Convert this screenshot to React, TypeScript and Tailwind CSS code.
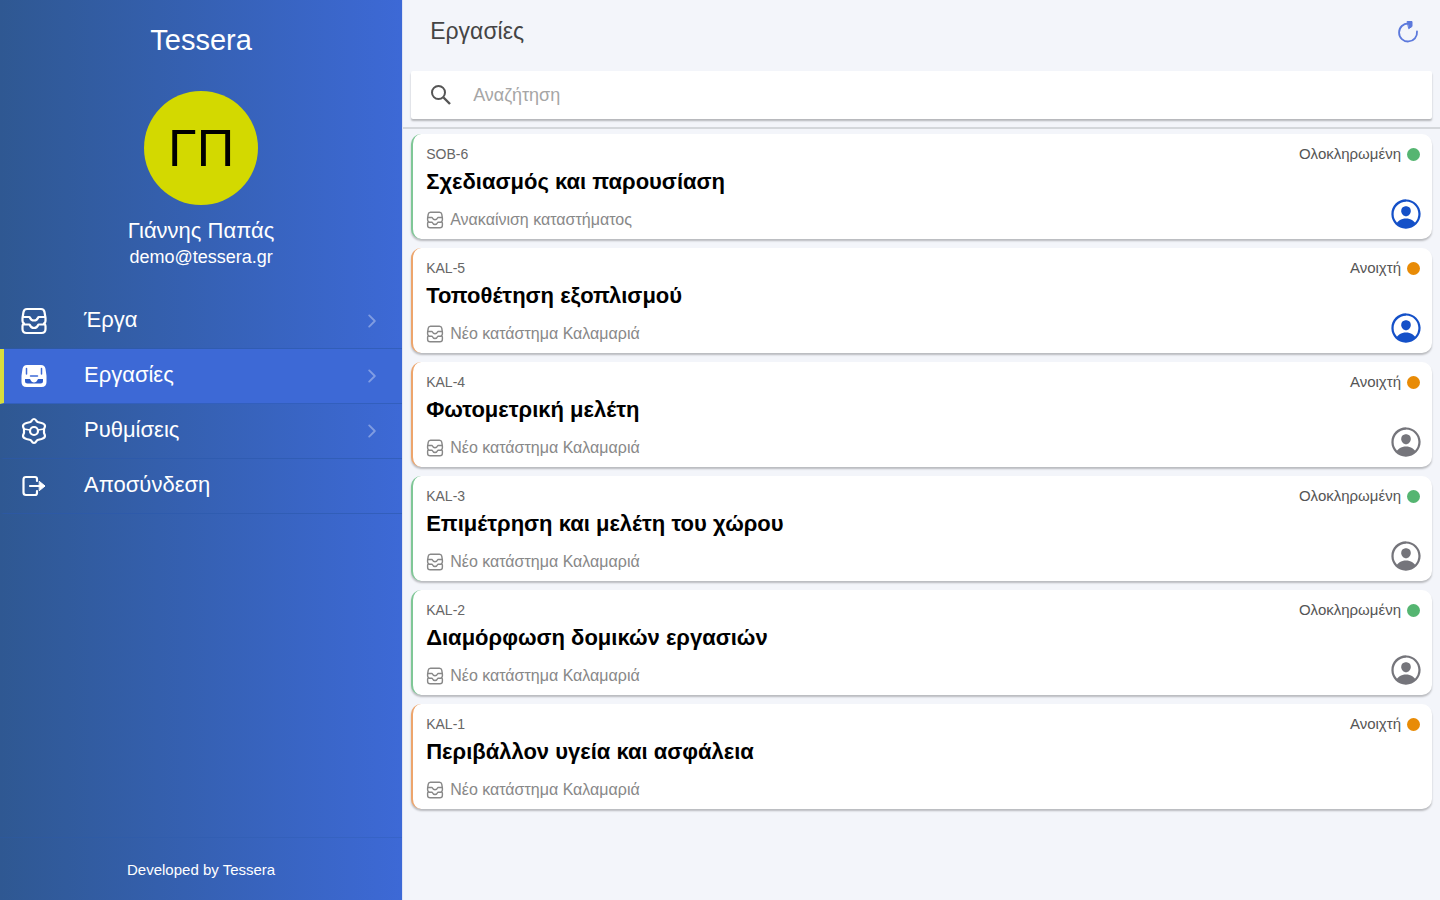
import { useState } from "react";
import { IoChevronForward, IoPersonCircleOutline } from "react-icons/io5";

type Status = "done" | "open";

interface Task {
  code: string; title: string; project: string; status: Status; assignee: "me" | "other" | null;
}

const TASKS: Task[] = [
  { code: "SOB-6", title: "Σχεδιασμός και παρουσίαση", project: "Ανακαίνιση καταστήματος", status: "done", assignee: "me" },
  { code: "KAL-5", title: "Τοποθέτηση εξοπλισμού", project: "Νέο κατάστημα Καλαμαριά", status: "open", assignee: "me" },
  { code: "KAL-4", title: "Φωτομετρική μελέτη", project: "Νέο κατάστημα Καλαμαριά", status: "open", assignee: "other" },
  { code: "KAL-3", title: "Επιμέτρηση και μελέτη του χώρου", project: "Νέο κατάστημα Καλαμαριά", status: "done", assignee: "other" },
  { code: "KAL-2", title: "Διαμόρφωση δομικών εργασιών", project: "Νέο κατάστημα Καλαμαριά", status: "done", assignee: "other" },
  { code: "KAL-1", title: "Περιβάλλον υγεία και ασφάλεια", project: "Νέο κατάστημα Καλαμαριά", status: "open", assignee: null },
];

interface IconProps { className?: string }

function StackIcon({ className }: IconProps) {
  return (
    <svg viewBox="0 0 28 28" className={className} fill="none" stroke="currentColor" strokeWidth="2.2" strokeLinejoin="round">
      <path d="M7 2h14q3 0 3.5 3L25.5 11v3q0 1.5-1.5 2.5q1.5 1 1.5 2.5v3q0 4-4 4h-15q-4 0-4-4v-3q0-1.5 1.5-2.5q-1.5-1-1.5-2.5v-3L3.5 5Q4 2 7 2z" />
      <path d="M2.5 10h7q1.5 3.500 4.5 3.500t4.500-3.500h7M3.500 17.500h6q1.500 3.500 4.500 3.500t4.500-3.500h6" />
    </svg>
  );
}

function TrayIcon({ className }: IconProps) {
  return (
    <svg viewBox="0 0 28 28" className={className} strokeLinejoin="round">
      <path d="M7 4h14q3 0 3.500 3l1 7v6q0 4-4 4h-15q-4 0-4-4v-6l1-7Q4 4 7 4z" fill="currentColor" stroke="currentColor" strokeWidth="2" />
      <path d="M5 17h5q1.500 3.500 4 3.500t4-3.500h5v2q0 2.500-2.500 2.500h-13Q5 21.500 5 19z" fill="#2f5cc9" />
      <path d="M6.500 6.500v5.500M21.500 6.500v5.500M10.500 14h7" stroke="#3d69d6" strokeWidth="1.500" strokeLinecap="round" />
    </svg>
  );
}

function CogIcon({ className }: IconProps) {
  return (
    <svg viewBox="0 0 28 28" className={className} fill="none" stroke="currentColor" strokeWidth="2.2" strokeLinejoin="round">
      <path d="M14 2q1.500 0 2.500 2l1 1 4 1q3.500 1 3.500 3 0 1-1 3v4q1 2 1 3 0 2-3.500 3l-4 1-1 1q-1 2-2.500 2t-2.500-2l-1-1-4-1Q3 21 3 19q0-1 1-3v-4q-1-2-1-3 0-2 3.500-3l4-1 1-1q1-2 2.500-2z" />
      <circle cx="14" cy="14" r="4" />
      <path d="M4 12l6 1M24 12l-6 1" strokeWidth="1.500" />
    </svg>
  );
}

function ExitIcon({ className }: IconProps) {
  return (
    <svg viewBox="0 0 28 28" className={className} fill="none" stroke="currentColor" strokeWidth="2.2" strokeLinecap="round" strokeLinejoin="round">
      <path d="M17 9V7q0-2-2-2H6Q3.500 5 3.500 7.500v13Q3.500 23 6 23h9q2 0 2-2v-2M10 14h14" />
      <path d="M19.500 9.500L25 14l-5.500 4.500z" fill="currentColor" strokeWidth="1" />
    </svg>
  );
}

function SearchIcon({ className }: IconProps) {
  return (
    <svg viewBox="0 0 24 24" className={className} fill="none" stroke="currentColor" strokeWidth="2">
      <circle cx="9.5" cy="9.5" r="6.5" />
      <path d="M14.5 14.5l6.5 6.5" strokeWidth="2.4" />
    </svg>
  );
}

function RefreshIcon({ className }: IconProps) {
  return (
    <svg viewBox="0 0 24 24" className={className} fill="none" stroke="currentColor" strokeWidth="1.8" strokeLinecap="round" strokeLinejoin="round">
      <path d="M12.500 3.500A9 9 0 1 0 21 11.500" />
      <path d="M11.500 1.500h4.500v5l-3 2z" fill="currentColor" strokeWidth="1" />
    </svg>
  );
}

const MENU = [
  { label: "Έργα", icon: StackIcon, arrow: true },
  { label: "Εργασίες", icon: TrayIcon, arrow: true },
  { label: "Ρυθμίσεις", icon: CogIcon, arrow: true },
  { label: "Αποσύνδεση", icon: ExitIcon, arrow: false },
];

const STATUS = {
  done: { label: "Ολοκληρωμένη", dot: "bg-[#55b571]", border: "border-[#7fc796]" },
  open: { label: "Ανοιχτή", dot: "bg-[#e88b06]", border: "border-[#eda56c]" },
};

function Sidebar() {
  const [active, setActive] = useState("Εργασίες");

  return (
    <aside className="flex w-[28%] shrink-0 flex-col border-r border-[#dfe4f5] bg-linear-to-r from-[#2f5892] to-[#3d69d6] text-white">
      <h1 className="pt-5 text-center text-[29px] leading-10">Tessera</h1>
      <div className="mt-[31px] flex flex-col items-center">
        <div className="flex size-[114px] items-center justify-center rounded-full bg-[#d3d900] text-[52px] text-black">ΓΠ</div>
        <p className="mt-3 text-[22px] leading-7">Γιάννης Παπάς</p>
        <p className="text-[18px] leading-6">demo@tessera.gr</p>
      </div>
      <nav className="mt-[25px] flex flex-col">
        {MENU.map(({ label, icon: Icon, arrow }) => (
          <button key={label} onClick={() => setActive(label)}
            className={`flex h-[55px] items-center border-b border-b-[#2c58ab]/60 border-l-4 pr-5 pl-4 text-left text-[22px] ${active === label ? "border-l-[#d9de3c] bg-[#3d69d6]" : "border-l-transparent"}`}>
            <Icon className="size-7 shrink-0" />
            <span className="ml-9 flex-1 pb-1">{label}</span>
            {arrow && <IoChevronForward className="size-5 text-white/35" />}
          </button>
        ))}
      </nav>
      <footer className="mt-auto border-t border-[#2c58ab]/30 pt-5 pb-[18px] text-center text-[15px] leading-6">Developed by Tessera</footer>
    </aside>
  );
}

function TaskCard({ task }: { task: Task }) {
  const status = STATUS[task.status];

  return (
    <li className={`flex h-[105px] justify-between rounded-[10px] border-l-2 bg-white pr-3 pl-[13px] shadow-[0_2px_2px_rgba(0,0,0,0.24)] ${status.border}`}>
      <div>
        <p className="pt-2.5 text-[14px] leading-5 text-[#666]">{task.code}</p>
        <h3 className="text-[22px] leading-9 font-bold text-black">{task.title}</h3>
        <p className="mt-2 flex items-center gap-1.5 text-[16px] leading-6 text-[#888]">
          <StackIcon className="size-[18px]" />
          {task.project}
        </p>
      </div>
      <div className="flex flex-col items-end">
        <p className="flex items-center gap-1.5 pt-2.5 text-[15px] leading-5 text-[#555]">
          {status.label}
          <span className={`size-[13px] rounded-full ${status.dot}`} />
        </p>
        {task.assignee && (
          <IoPersonCircleOutline className={`mt-8 -mr-1 size-9 ${task.assignee === "me" ? "text-[#1450c8]" : "text-[#75757b]"}`} />
        )}
      </div>
    </li>
  );
}

export default function App() {
  const [search, setSearch] = useState("");
  const tasks = TASKS.filter((t) => t.title.toLowerCase().includes(search.toLowerCase()));

  return (
    <div className="flex min-h-screen bg-[#f3f5fa] font-['Liberation_Sans',sans-serif]">
      <Sidebar />
      <main className="min-w-0 flex-1">
        <header className="border-b-2 border-[#d4d7db] px-2 pb-2">
          <div className="flex h-[71px] items-center justify-between pr-3 pb-2 pl-[19px]">
            <h2 className="text-[23px] text-[#444]">Εργασίες</h2>
            <button aria-label="Ανανέωση" className="text-[#5c79dc]">
              <RefreshIcon className="size-6" />
            </button>
          </div>
          <label className="flex h-12 items-center gap-5 rounded-xs bg-white px-[18px] shadow-[0_2px_2px_rgba(0,0,0,0.26)]">
            <SearchIcon className="size-6 text-[#555]" />
            <input value={search} onChange={(e) => setSearch(e.target.value)} placeholder="Αναζήτηση" aria-label="Αναζήτηση"
              className="flex-1 bg-transparent text-[18px] outline-none placeholder:text-[#a6a6a6]" />
          </label>
        </header>
        <ul className="flex flex-col gap-[9px] px-2 pt-[5px]">
          {tasks.map((t) => <TaskCard key={t.code} task={t} />)}
        </ul>
      </main>
    </div>
  );
}
